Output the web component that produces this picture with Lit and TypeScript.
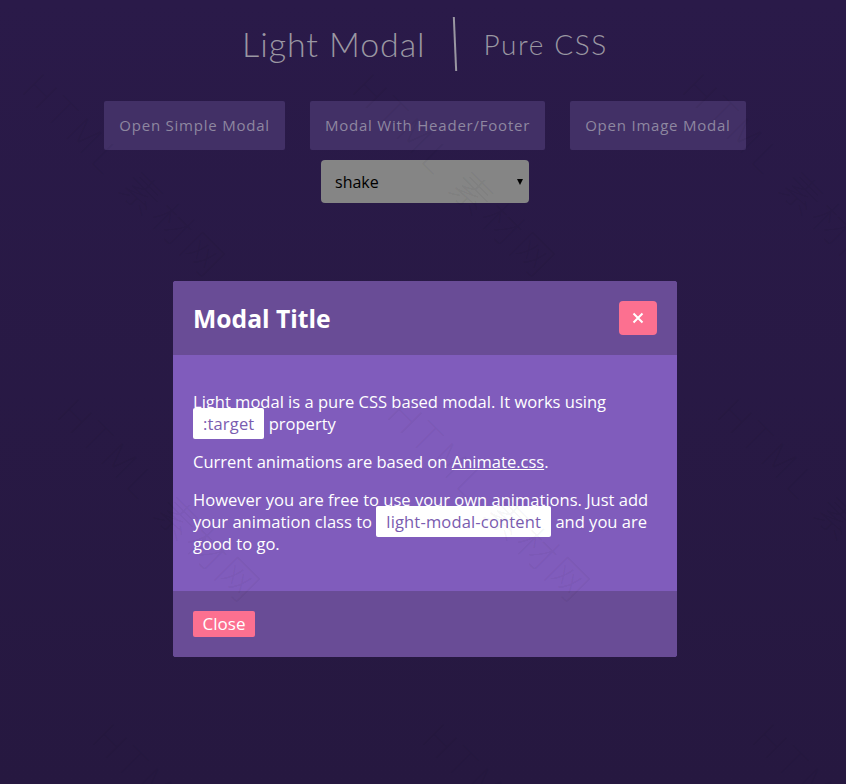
import { LitElement, html, css } from "lit";
import { customElement } from "lit/decorators.js";

const marks: { x: number; y: number }[] = [];
[
  { y: 67, xs: [43, 373, 703] },
  { y: 392, xs: [78, 408, 738] },
  { y: 717, xs: [113, 443, 773] },
].forEach((row) => row.xs.forEach((x) => marks.push({ x, y: row.y })));

@customElement("app-root")
export class AppRoot extends LitElement {
  static styles = css`
    :host {
      display: block;
      position: relative;
      width: 846px;
      height: 784px;
      overflow: hidden;
      background: linear-gradient(#2a1a49, #261840);
      font-family: "Open Sans", "Noto Sans", sans-serif;
    }
    .page {
      width: 850px;
      display: flex;
      flex-direction: column;
      align-items: center;
      padding-top: 14px;
    }
    h1 {
      margin: 0;
      height: 60px;
      font-family: "Lato", sans-serif;
      font-weight: 300;
      font-size: 34px;
      line-height: 60px;
      color: #9a97a2;
      letter-spacing: 0.9px;
      white-space: nowrap;
      display: flex;
      align-items: center;
      gap: 28px;
    }
    h1 small {
      font-size: 28px;
      letter-spacing: 1.6px;
      font-weight: 300;
    }
    .bar {
      display: inline-block;
      width: 2px;
      height: 54px;
      background: #9a97a2;
      transform: rotate(-2.5deg);
    }
    .buttons {
      display: flex;
      gap: 25px;
      margin-top: 27px;
    }
    .btn {
      height: 49px;
      box-sizing: border-box;
      padding: 0 15px 2px;
      display: flex;
      align-items: center;
      background: #423066;
      border-radius: 2px;
      color: #8e87a0;
      font-size: 15px;
      letter-spacing: 0.78px;
      white-space: nowrap;
    }
    .select {
      box-sizing: border-box;
      width: 208px;
      height: 43px;
      margin-top: 10px;
      padding: 0 6px 0 14px;
      display: flex;
      align-items: center;
      justify-content: space-between;
      background: #858585;
      border-radius: 4px;
      color: #000;
      font-size: 16px;
    }
    .arrow {
      width: 0;
      height: 0;
      border-left: 3px solid transparent;
      border-right: 3px solid transparent;
      border-top: 6px solid #000;
    }
    .marks {
      position: absolute;
      inset: 0;
      pointer-events: none;
    }
    .mark {
      position: absolute;
      transform-origin: 0 0;
      transform: rotate(45deg);
      font-family: "DejaVu Sans", "Noto Sans CJK SC", sans-serif;
      font-size: 40px;
      font-weight: 200;
      line-height: 40px;
      white-space: nowrap;
      letter-spacing: 3px;
      color: rgba(0, 0, 0, 0.045);
    }
    .overlay {
      position: absolute;
      inset: 0;
      width: 850px;
      display: flex;
      justify-content: center;
      align-items: flex-start;
      padding-top: 281px;
      box-sizing: border-box;
    }
    .modal {
      width: 504px;
      border-radius: 3px;
      overflow: hidden;
      background: #805cbc;
      color: #fff;
      font-size: 16.55px;
      line-height: 22px;
    }
    .modal-head {
      height: 74px;
      box-sizing: border-box;
      padding: 0 20px;
      display: flex;
      align-items: center;
      justify-content: space-between;
      background: #694c96;
    }
    .title {
      font-size: 24.7px;
      font-weight: 700;
      padding-top: 1px;
    }
    .x {
      width: 38px;
      height: 34px;
      border-radius: 4px;
      background: #fc7090;
      display: flex;
      align-items: center;
      justify-content: center;
    }
    .modal-body {
      box-sizing: border-box;
      height: 236px;
      padding: 36px 20px 0;
    }
    p {
      margin: 0 0 16px;
    }
    code {
      font-family: inherit;
      display: inline-block;
      padding: 5px 10px 4px;
      line-height: 22px;
      margin: -5px 0 -4px;
      background: #fff;
      color: #7a5cb0;
      border-radius: 2px;
      letter-spacing: 0.15px;
    }
    a {
      color: inherit;
      text-decoration: underline;
    }
    .modal-foot {
      height: 66px;
      box-sizing: border-box;
      padding: 20px;
      background: #694c96;
    }
    .close {
      display: block;
      width: 62px;
      height: 26px;
      line-height: 26px;
      text-align: center;
      background: #fc7090;
      border-radius: 2px;
      font-size: 17px;
    }
  `;

  render() {
    return html`
      <div class="page">
        <h1>
          <span>Light Modal</span><span class="bar"></span><small>Pure CSS</small>
        </h1>
        <div class="buttons">
          <div class="btn">Open Simple Modal</div>
          <div class="btn">Modal With Header/Footer</div>
          <div class="btn">Open Image Modal</div>
        </div>
        <div class="select"><span>shake</span><span class="arrow"></span></div>
      </div>
      <div class="overlay">
        <div class="modal">
          <div class="modal-head">
            <div class="title">Modal Title</div>
            <div class="x">
              <svg width="12" height="12" viewBox="0 0 12 12">
                <path d="M1.5 1.5 L10.5 10.5 M10.5 1.5 L1.5 10.5" stroke="#fff" stroke-width="2" fill="none" />
              </svg>
            </div>
          </div>
          <div class="modal-body">
            <p>Light modal is a pure CSS based modal. It works using <code>:target</code> property</p>
            <p>Current animations are based on <a>Animate.css</a>.</p>
            <p>However you are free to use your own animations. Just add your animation class to <code>light-modal-content</code> and you are good to go.</p>
          </div>
          <div class="modal-foot"><span class="close">Close</span></div>
        </div>
      </div>
      <div class="marks">
        ${marks.map(
          (m) => html`<div class="mark" style="left:${m.x}px;top:${m.y}px">HTML 素材网</div>`
        )}
      </div>
    `;
  }
}
